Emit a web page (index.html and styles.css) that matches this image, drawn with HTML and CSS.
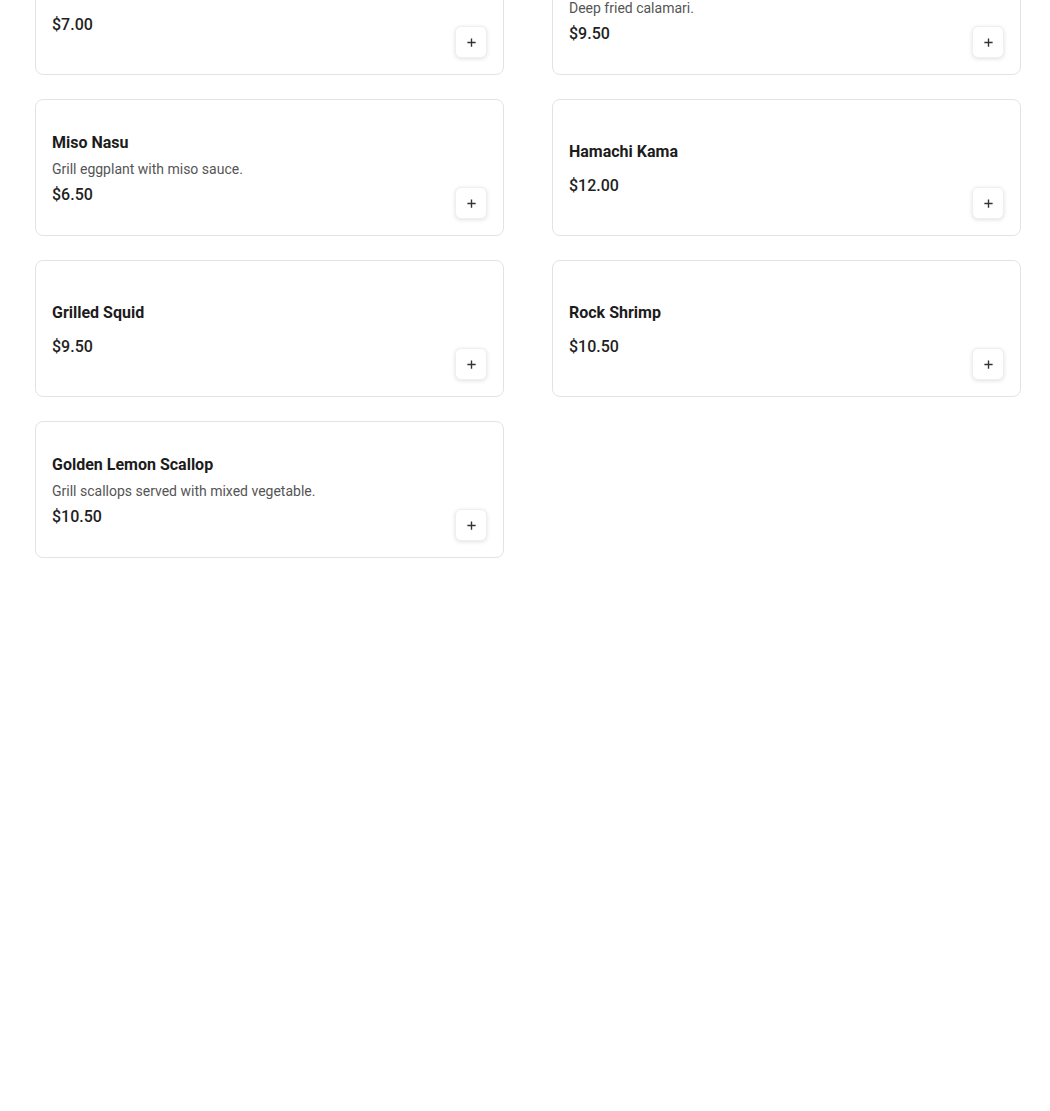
FILE: index.html
```html
<!DOCTYPE html>
<html lang="en">
<head>
    <meta charset="UTF-8">
    <meta name="viewport" content="width=device-width, initial-scale=1.0">
    <title>Menu - Appetizers</title>
    <link rel="stylesheet" href="styles.css">
</head>
<body>

    <!-- Danh sách món (trang đang cuộn xuống giữa chừng) -->
    <div class="menu-list">

        <div class="menu-item">
            <div class="item-info">
                <h3 class="item-name">Agedashi Tofu</h3>
                <p class="item-desc"></p>
                <div class="item-price">$7.00</div>
            </div>
            <button class="add-btn" aria-label="Add">
                <svg viewBox="0 0 12 12" width="12" height="12"><path d="M6 1.5v9M1.5 6h9" /></svg>
            </button>
        </div>

        <div class="menu-item">
            <div class="item-info">
                <h3 class="item-name">Ika Fry</h3>
                <p class="item-desc">Deep fried calamari.</p>
                <div class="item-price">$9.50</div>
            </div>
            <button class="add-btn" aria-label="Add">
                <svg viewBox="0 0 12 12" width="12" height="12"><path d="M6 1.5v9M1.5 6h9" /></svg>
            </button>
        </div>

        <div class="menu-item">
            <div class="item-info">
                <h3 class="item-name">Miso Nasu</h3>
                <p class="item-desc">Grill eggplant with miso sauce.</p>
                <div class="item-price">$6.50</div>
            </div>
            <button class="add-btn" aria-label="Add">
                <svg viewBox="0 0 12 12" width="12" height="12"><path d="M6 1.5v9M1.5 6h9" /></svg>
            </button>
        </div>

        <div class="menu-item">
            <div class="item-info">
                <h3 class="item-name">Hamachi Kama</h3>
                <p class="item-desc"></p>
                <div class="item-price">$12.00</div>
            </div>
            <button class="add-btn" aria-label="Add">
                <svg viewBox="0 0 12 12" width="12" height="12"><path d="M6 1.5v9M1.5 6h9" /></svg>
            </button>
        </div>

        <div class="menu-item">
            <div class="item-info">
                <h3 class="item-name">Grilled Squid</h3>
                <p class="item-desc"></p>
                <div class="item-price">$9.50</div>
            </div>
            <button class="add-btn" aria-label="Add">
                <svg viewBox="0 0 12 12" width="12" height="12"><path d="M6 1.5v9M1.5 6h9" /></svg>
            </button>
        </div>

        <div class="menu-item">
            <div class="item-info">
                <h3 class="item-name">Rock Shrimp</h3>
                <p class="item-desc"></p>
                <div class="item-price">$10.50</div>
            </div>
            <button class="add-btn" aria-label="Add">
                <svg viewBox="0 0 12 12" width="12" height="12"><path d="M6 1.5v9M1.5 6h9" /></svg>
            </button>
        </div>

        <div class="menu-item">
            <div class="item-info">
                <h3 class="item-name">Golden Lemon Scallop</h3>
                <p class="item-desc">Grill scallops served with mixed vegetable.</p>
                <div class="item-price">$10.50</div>
            </div>
            <button class="add-btn" aria-label="Add">
                <svg viewBox="0 0 12 12" width="12" height="12"><path d="M6 1.5v9M1.5 6h9" /></svg>
            </button>
        </div>

    </div>

</body>
</html>
```

FILE: styles.css
```css
body {
    font-family: Roboto, "Liberation Sans", Arial, sans-serif;
    margin: 0;
    padding: 0;
    background-color: #fff;
    color: #1f1f1f;
}

/* trang đang cuộn: hàng đầu bị cắt mất 62px */
.menu-list {
    display: grid;
    grid-template-columns: 1fr 1fr;
    column-gap: 48px;
    row-gap: 24px;
    margin-top: -62px;
    padding: 0 29px 40px 35px;
}

.menu-item {
    display: flex;
    min-height: 137px;
    box-sizing: border-box;
    padding: 16px;
    border: 1px solid #e3e3e3;
    border-radius: 8px;
    background-color: #fff;
}

.item-info {
    flex: 1;
    align-self: center;
    display: flex;
    flex-direction: column;
    gap: 5px;
    padding-top: 3px;
}

.item-name {
    margin: 0;
    font-size: 16px;
    line-height: 24px;
    font-weight: 700;
    color: #1c1c1c;
}

.item-desc {
    margin: 0;
    font-size: 14px;
    line-height: 18px;
    color: #555;
}

.item-desc:empty {
    display: block;
    height: 0;
}

.item-price {
    font-size: 16px;
    line-height: 24px;
    font-weight: 500;
    color: #1f1f1f;
}

.add-btn {
    align-self: flex-end;
    width: 32px;
    height: 32px;
    padding: 0;
    display: flex;
    align-items: center;
    justify-content: center;
    background-color: #fff;
    border: 1px solid #efefef;
    border-radius: 6px;
    box-shadow: 0 1px 4px rgba(0, 0, 0, 0.12);
    cursor: pointer;
}

.add-btn svg {
    width: 11px;
    height: 11px;
    stroke: #333;
    stroke-width: 1.5;
    fill: none;
}
```
